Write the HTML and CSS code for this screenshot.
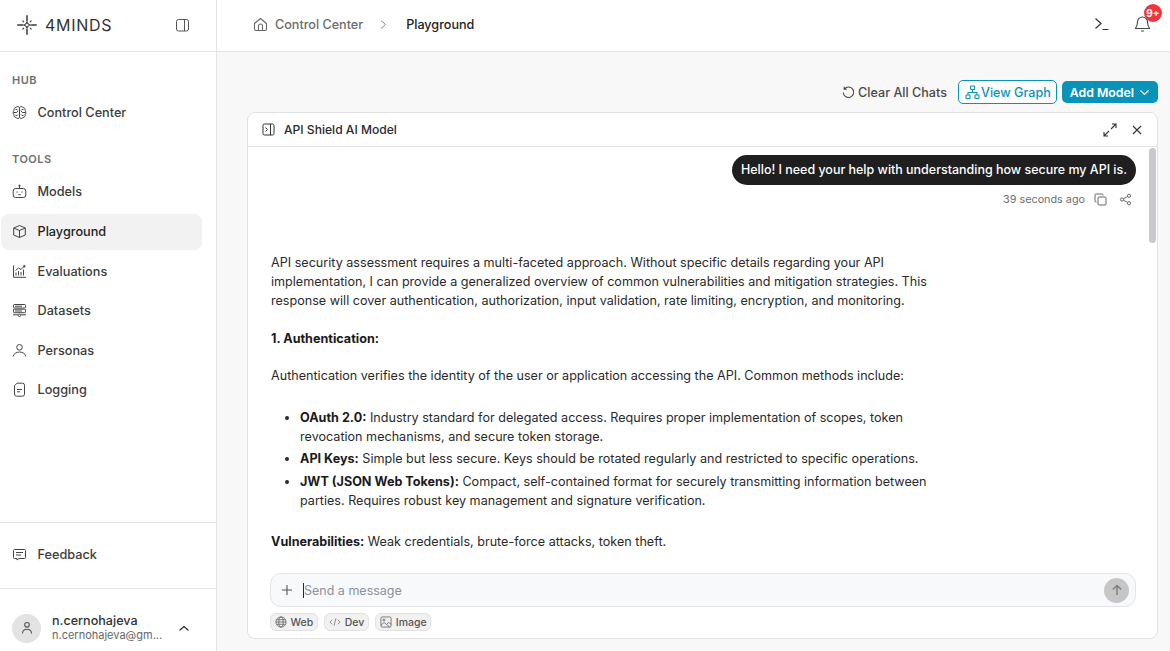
FILE: index.html
```html
<!DOCTYPE html>
<html lang="en">
<head>
    <meta charset="UTF-8">
    <title>Playground</title>
    <link rel="stylesheet" href="styles.css">
</head>
<body>
    <aside class="sidebar">
        <div class="brand">
            <div class="logo">
                <svg width="20" height="20" viewBox="0 0 20 20" fill="none" stroke="#3a3a3a" stroke-width="1.500" stroke-linecap="round"><path d="M10 .8v4.700M10 14.500v4.700M.8 10h4.700M14.500 10h4.700"/><path stroke-width="1.100" d="M10 6.200Q10.400 9.600 13.800 10Q10.400 10.400 10 13.800Q9.600 10.400 6.200 10Q9.600 9.600 10 6.200z"/><path stroke-width="1.100" d="M5.800 5.800l1 1M14.200 5.800l-1 1M5.800 14.200l1-1M14.200 14.200l-1-1"/></svg>
                <span>4MINDS</span>
            </div>
            <svg class="ico" width="15" height="15" viewBox="0 0 15 15" fill="none" stroke="#555" stroke-width="1"><rect x="1.500" y="1.500" width="12" height="11.500" rx="2"/><path d="M9.500 1.500v11.500"/></svg>
        </div>
        <div class="nav-area">
            <div class="nav-label">HUB</div>
            <a class="nav-item">
                <svg width="15" height="15" viewBox="0 0 15 15" fill="none" stroke="#444" stroke-width="1"><path d="M7.500 2.500C7 1.300 4.800 1.200 4 2.500 2.500 2.500 1.500 4 2 5.300.9 6.300.9 8.700 2 9.700 1.500 11 2.500 12.500 4 12.500c.8 1.300 3 1.200 3.500 0 .5 1.200 2.700 1.300 3.500 0 1.500 0 2.500-1.500 2-2.800 1.100-1 1.100-3.400 0-4.400.5-1.300-.5-2.800-2-2.800-.8-1.300-3-1.200-3.500 0z"/><path d="M7.500 2.500v10M1.500 7.500h3.200l1.300-1.500M13.500 7.500h-3.200L9 6M3.500 4.500h1.500l1 1M11.500 4.500H10l-1 1M3.500 10.500h1.500l1-1M11.500 10.500H10l-1-1"/></svg>
                Control Center
            </a>
            <div class="nav-label second">TOOLS</div>
            <a class="nav-item">
                <svg width="15" height="15" viewBox="0 0 15 15" fill="none" stroke="#444" stroke-width="1"><rect x="1.200" y="4.500" width="12.600" height="9" rx="2.500"/><path d="M7.500 4.500V2.500"/><circle cx="7.500" cy="1.800" r=".7" fill="#444"/><path d="M5 7.500v1.200M10 7.500v1.200M6.300 10.700h2.400"/></svg>
                Models
            </a>
            <a class="nav-item active">
                <svg width="15" height="15" viewBox="0 0 15 15" fill="none" stroke="#444" stroke-width="1" stroke-linejoin="round"><path d="M7.500 1.500l5.800 2.500v7l-5.800 2.500-5.800-2.500V4zM1.700 4l5.800 2.500L13.300 4M7.500 6.500v7"/></svg>
                Playground
            </a>
            <a class="nav-item">
                <svg width="15" height="15" viewBox="0 0 15 15" fill="none" stroke="#444" stroke-width="1"><path d="M1.500 1.500v11.800h12.500M4 11.500V8.500M6.500 11.500V7M9 11.500V8M11.500 11.500V5.500M3.500 6.500l3-2.500 2.500 1.500 3-3"/><circle cx="12.300" cy="2.300" r=".8" fill="#444"/></svg>
                Evaluations
            </a>
            <a class="nav-item">
                <svg width="15" height="15" viewBox="0 0 15 15" fill="none" stroke="#444" stroke-width="1"><rect x="1.500" y="1.500" width="12" height="3.500" rx=".8"/><rect x="1.500" y="6.200" width="12" height="3.500" rx=".8"/><path d="M1 11.800h5M9 11.800h5M3 3.200h7M3 8h7"/><circle cx="7.500" cy="12.300" r="1.200"/></svg>
                Datasets
            </a>
            <a class="nav-item">
                <svg width="15" height="15" viewBox="0 0 15 15" fill="none" stroke="#444" stroke-width="1"><circle cx="7.500" cy="4.300" r="2.800"/><path d="M1.200 13.500c.5-3 3.300-4.500 6.300-4.500s5.800 1.500 6.300 4.500"/></svg>
                Personas
            </a>
            <a class="nav-item">
                <svg width="15" height="15" viewBox="0 0 15 15" fill="none" stroke="#444" stroke-width="1"><path d="M5 1.200h5.500a2 2 0 0 1 2 2v9a2 2 0 0 1-2 2h-6a2 2 0 0 1-2-2V3.700zM5 7.500h5M5 9.800h3"/></svg>
                Logging
            </a>
        </div>
        <div class="feedback">
            <a class="nav-item">
                <svg width="15" height="15" viewBox="0 0 15 15" fill="none" stroke="#444" stroke-width="1"><path d="M2.500 2.500h10a1 1 0 0 1 1 1v7a1 1 0 0 1-1 1H7l-2 1.500v-1.500H2.500a1 1 0 0 1-1-1v-7a1 1 0 0 1 1-1zM4 5.500h7M4 8h5"/></svg>
                Feedback
            </a>
        </div>
        <div class="user">
            <div class="avatar">
                <svg width="14" height="14" viewBox="0 0 14 14" fill="none" stroke="#555" stroke-width="1.100"><circle cx="7" cy="3.800" r="2.300"/><path d="M2.500 12.500c0-3 2-4.300 4.500-4.300s4.500 1.300 4.500 4.300"/></svg>
            </div>
            <div class="user-text">
                <div class="user-name">n.cernohajeva</div>
                <div class="user-mail">n.cernohajeva@gm...</div>
            </div>
            <svg width="12" height="12" viewBox="0 0 12 12" fill="none" stroke="#333" stroke-width="1.300" stroke-linecap="round" stroke-linejoin="round"><path d="M2 8l4-3.500L10 8"/></svg>
        </div>
    </aside>

    <div class="main">
        <header class="topbar">
            <div class="crumbs">
                <svg width="15" height="15" viewBox="0 0 15 15" fill="none" stroke="#666" stroke-width="1.100" stroke-linejoin="round"><path d="M1.500 6.500L7.500 1.500l6 5v5.500a1.500 1.500 0 0 1-1.500 1.500H3a1.500 1.500 0 0 1-1.500-1.500zM5.500 13.500V9a2 2 0 0 1 4 0v4.500"/></svg>
                <span class="crumb">Control Center</span>
                <svg class="sep" width="9" height="11" viewBox="0 0 9 11" fill="none" stroke="#888" stroke-width="1"><path d="M2 1.500l4.500 4-4.500 4"/></svg>
                <span class="crumb-now">Playground</span>
            </div>
            <div class="top-actions">
                <svg width="16" height="14" viewBox="0 0 16 14" fill="none" stroke="#333" stroke-width="1.200"><path d="M1.500 1.500L7 6.500l-5.500 5M8.500 12.500h6"/></svg>
                <div class="bell">
                    <svg width="17" height="18" viewBox="0 0 17 18" fill="none" stroke="#444" stroke-width="1.100" stroke-linejoin="round"><path d="M8.500 2a5 5 0 0 0-5 5c0 4-2 6-2 6.500h14c0-.5-2-2.500-2-6.500a5 5 0 0 0-5-5zM7 16h3"/></svg>
                    <span class="badge">9+</span>
                </div>
            </div>
        </header>

        <main class="content">
            <div class="toolbar">
                <button class="btn-plain">
                    <svg width="13" height="13" viewBox="0 0 13 13" fill="none" stroke="#444" stroke-width="1.100"><path d="M2.600 2.800A5.200 5.200 0 1 1 1.300 6.500M2.200 .8v2.500h2.500"/></svg>
                    Clear All Chats
                </button>
                <button class="btn-outline">
                    <svg width="15" height="15" viewBox="0 0 15 15" fill="none" stroke="#0a93b8" stroke-width="1.100"><rect x="5.500" y="1" width="4" height="3.500" rx=".6"/><rect x="1" y="10" width="4" height="3.500" rx=".6"/><rect x="10" y="10" width="4" height="3.500" rx=".6"/><path d="M7.500 4.500v3M3 10V7.500h9V10"/></svg>
                    View Graph
                </button>
                <button class="btn-fill">
                    Add Model
                    <svg width="11" height="11" viewBox="0 0 11 11" fill="none" stroke="#fff" stroke-width="1.200"><path d="M1.500 3.500l4 4 4-4"/></svg>
                </button>
            </div>

            <section class="panel">
                <div class="panel-head">
                    <div class="panel-title">
                        <svg width="13" height="13" viewBox="0 0 13 13" fill="none" stroke="#333" stroke-width="1"><rect x="1" y="1" width="11" height="11" rx="1.500"/><path d="M8.500 1v11M3.500 4.500l2 2-2 2"/></svg>
                        API Shield AI Model
                    </div>
                    <div class="panel-icons">
                        <svg width="14" height="14" viewBox="0 0 14 14" fill="none" stroke="#333" stroke-width="1.100"><path d="M8 6l5-5M9 1h4v4M6 8l-5 5M1 9v4h4"/></svg>
                        <svg width="12" height="12" viewBox="0 0 12 12" fill="none" stroke="#333" stroke-width="1.100"><path d="M2 2l8 8M10 2l-8 8"/></svg>
                    </div>
                </div>
                <div class="chat">
                    <div class="scroll-thumb"></div>
                    <div class="user-row">
                        <div class="bubble">Hello! I need your help with understanding how secure my API is.</div>
                        <div class="meta">
                            <span>39 seconds ago</span>
                            <svg width="13" height="13" viewBox="0 0 13 13" fill="none" stroke="#666" stroke-width="1"><rect x="4" y="4" width="8" height="8" rx="1"/><path d="M2.500 9H2a1 1 0 0 1-1-1V2a1 1 0 0 1 1-1h6a1 1 0 0 1 1 1v.500"/></svg>
                            <svg width="13" height="13" viewBox="0 0 13 13" fill="none" stroke="#666" stroke-width="1"><circle cx="10" cy="2.800" r="1.600"/><circle cx="3" cy="6.500" r="1.600"/><circle cx="10" cy="10.200" r="1.600"/><path d="M4.500 5.700l4-2.100M4.500 7.300l4 2.100"/></svg>
                        </div>
                    </div>
                    <div class="answer">
                        <p>API security assessment requires a multi-faceted approach. Without specific details regarding your API implementation, I can provide a generalized overview of common vulnerabilities and mitigation strategies. This response will cover authentication, authorization, input validation, rate limiting, encryption, and monitoring.</p>
                        <p><b>1. Authentication:</b></p>
                        <p class="before-list">Authentication verifies the identity of the user or application accessing the API. Common methods include:</p>
                        <ul>
                            <li><b>OAuth 2.0:</b> Industry standard for delegated access. Requires proper implementation of scopes, token revocation mechanisms, and secure token storage.</li>
                            <li><b>API Keys:</b> Simple but less secure. Keys should be rotated regularly and restricted to specific operations.</li>
                            <li><b>JWT (JSON Web Tokens):</b> Compact, self-contained format for securely transmitting information between parties. Requires robust key management and signature verification.</li>
                        </ul>
                        <p><b>Vulnerabilities:</b> Weak credentials, brute-force attacks, token theft.</p>
                    </div>
                </div>
                <div class="composer">
                    <div class="input-box">
                        <svg width="12" height="12" viewBox="0 0 12 12" fill="none" stroke="#555" stroke-width="1.100"><path d="M6 1v10M1 6h10"/></svg>
                        <span class="caret"></span>
                        <span class="placeholder">Send a message</span>
                        <span class="send">
                            <svg width="12" height="12" viewBox="0 0 12 12" fill="none" stroke="#7c7c7c" stroke-width="1.400"><path d="M6 11V1.500M1.800 5.500L6 1.500l4.200 4"/></svg>
                        </span>
                    </div>
                    <div class="chips">
                        <span class="chip">
                            <svg width="12" height="12" viewBox="0 0 13 13" fill="none" stroke="#666" stroke-width=".9"><circle cx="6.500" cy="6.500" r="5.500"/><ellipse cx="6.500" cy="6.500" rx="2.400" ry="5.500"/><path d="M1 6.500h11M1.800 4h9.400M1.800 9h9.400"/></svg>
                            Web
                        </span>
                        <span class="chip">
                            <svg width="12" height="12" viewBox="0 0 13 13" fill="none" stroke="#777" stroke-width=".9"><path d="M3.500 4L1 6.500 3.500 9M9.500 4L12 6.500 9.500 9M7.500 2.500l-2 8"/></svg>
                            Dev
                        </span>
                        <span class="chip">
                            <svg width="12" height="12" viewBox="0 0 13 13" fill="none" stroke="#666" stroke-width=".9"><rect x="1" y="1" width="11" height="11" rx="1.500"/><circle cx="4.300" cy="4.300" r="1.100"/><path d="M1 10l3.500-3 6 5M7.500 8.500L9.500 7 12 9"/></svg>
                            Image
                        </span>
                    </div>
                </div>
            </section>
        </main>
    </div>
</body>
</html>
```

FILE: styles.css
```css
* {
    box-sizing: border-box;
}

body, html {
    height: 100%;
    margin: 0;
}

body {
    display: flex;
    overflow: hidden;
    background-color: #fff;
    color: #1f1f1f;
    font-family: Inter, "Liberation Sans", sans-serif;
    font-size: 12.600px;
}

svg {
    flex-shrink: 0;
    display: block;
}

/* sidebar */
.sidebar {
    width: 217px;
    height: 651px;
    display: flex;
    flex-direction: column;
    border-right: 1px solid #e4e4e4;
}

.brand {
    height: 52px;
    flex-shrink: 0;
    display: flex;
    justify-content: space-between;
    align-items: center;
    padding: 0 26px 1px 17px;
    border-bottom: 1px solid #e4e4e4;
}

.logo {
    display: flex;
    align-items: center;
    gap: 8px;
    font-size: 16px;
    letter-spacing: 0.7px;
    color: #333;
}

.nav-area {
    flex: 1;
    padding-top: 21px;
}

.nav-label {
    height: 14px;
    line-height: 14px;
    padding-left: 12px;
    margin-bottom: 7px;
    font-size: 11px;
    font-weight: 600;
    letter-spacing: 0.5px;
    color: #6f6f6f;
}

.nav-label.second {
    margin-top: 22.300px;
}

.nav-item {
    width: 201px;
    height: 36px;
    margin: 0 0 3.500px 1px;
    padding-left: 11px;
    display: flex;
    align-items: center;
    gap: 10.500px;
    border-radius: 8px;
    font-size: 12.700px;
    font-weight: 500;
    color: #3c3c3c;
}

.nav-item.active {
    margin-top: 4.700px;
    background-color: #f2f2f2;
    color: #222;
}

.feedback {
    height: 67px;
    flex-shrink: 0;
    padding-top: 13px;
    border-top: 1px solid #e4e4e4;
    border-bottom: 1px solid #e4e4e4;
}

.user {
    height: 62px;
    flex-shrink: 0;
    display: flex;
    align-items: center;
    padding: 16px 26px 0 12px;
}

.avatar {
    width: 29px;
    height: 29px;
    margin-right: 11px;
    display: flex;
    align-items: center;
    justify-content: center;
    border-radius: 50%;
    background-color: #e3e3e3;
}

.user-text {
    flex: 1;
}

.user-name {
    line-height: 15px;
    font-weight: 500;
    color: #333;
}

.user-mail {
    line-height: 15px;
    font-size: 11px;
    color: #666;
}

/* top bar */
.main {
    flex: 1;
    min-width: 0;
    display: flex;
    flex-direction: column;
}

.topbar {
    height: 52px;
    flex-shrink: 0;
    display: flex;
    justify-content: space-between;
    align-items: center;
    padding: 0 19px 3px 36px;
    border-bottom: 1px solid #e4e4e4;
}

.crumbs {
    display: flex;
    align-items: center;
}

.crumb {
    margin-left: 7px;
    font-weight: 500;
    color: #6b6b6b;
}

.sep {
    margin: 0 18px 0 16px;
}

.crumb-now {
    font-weight: 500;
    color: #222;
}

.top-actions {
    display: flex;
    align-items: center;
    gap: 24px;
}

.bell {
    position: relative;
}

.badge {
    position: absolute;
    top: -11px;
    left: 10px;
    width: 18px;
    height: 18px;
    border-radius: 50%;
    background-color: #f0353f;
    color: #fff;
    font-size: 10px;
    font-weight: 700;
    line-height: 18px;
    text-align: center;
}

/* content */
.content {
    flex: 1;
    min-height: 0;
    padding: 29px 12px 13px 30px;
    background-color: #f8f8f8;
}

.toolbar {
    display: flex;
    justify-content: flex-end;
    align-items: center;
    gap: 5px;
    margin-bottom: 9px;
    height: 22px;
}

button {
    font-family: inherit;
    font-size: 12.600px;
    font-weight: 500;
    display: flex;
    align-items: center;
    border-radius: 5px;
    cursor: pointer;
}

.btn-plain {
    gap: 3px;
    margin-right: 6px;
    padding: 0;
    border: 0;
    background: none;
    color: #4a4a4a;
}

.btn-outline {
    height: 24px;
    gap: 1px;
    padding: 0 5px 0 6px;
    border: 1px solid #0a93b8;
    background-color: #fff;
    color: #0a93b8;
}

.btn-fill {
    height: 22px;
    gap: 5px;
    padding: 0 8px;
    border: 0;
    background-color: #0a93b8;
    color: #fff;
    font-size: 12.300px;
    font-weight: 600;
}

.panel {
    height: 527px;
    display: flex;
    flex-direction: column;
    background-color: #fff;
    border: 1px solid #e2e2e2;
    border-radius: 8px;
}

.panel-head {
    height: 34px;
    flex-shrink: 0;
    display: flex;
    justify-content: space-between;
    align-items: center;
    padding: 0 14px;
    border-bottom: 1px solid #e4e4e4;
}

.panel-title {
    display: flex;
    align-items: center;
    gap: 9px;
    font-size: 12.100px;
    font-weight: 500;
    color: #2a2a2a;
}

.panel-icons {
    display: flex;
    align-items: center;
    gap: 14px;
}

.chat {
    position: relative;
    flex: 1;
    min-height: 0;
    overflow: hidden;
    padding: 8px 21px 0 23px;
}

.scroll-thumb {
    position: absolute;
    top: 1px;
    right: 1px;
    width: 7px;
    height: 95px;
    border-radius: 4px;
    background-color: #c6c9cf;
}

.user-row {
    display: flex;
    flex-direction: column;
    align-items: flex-end;
}

.bubble {
    height: 30px;
    line-height: 30px;
    padding: 0 9px;
    border-radius: 15px;
    background-color: #1f1f1f;
    color: #fff;
    font-weight: 500;
    font-size: 12.470px;
}

.meta {
    display: flex;
    align-items: center;
    height: 14px;
    margin-top: 7px;
    padding-right: 4px;
    gap: 9px;
    font-size: 10.800px;
    color: #6f6f6f;
}

.meta svg + svg {
    margin-left: 3px;
}

.answer {
    width: 665px;
    margin-top: 47px;
    line-height: 19px;
    color: #2a2a2a;
}

.answer p {
    margin: 0 0 18.500px;
}

.answer p.before-list {
    margin-bottom: 22.500px;
}

.answer b {
    font-weight: 700;
    color: #1a1a1a;
}

.answer ul {
    margin: 0 0 22px;
    padding-left: 29px;
}

.answer li {
    margin-bottom: 3.500px;
}

.composer {
    height: 65px;
    flex-shrink: 0;
    padding: 0 21px 0 22px;
    background-color: #fff;
    border-radius: 0 0 8px 8px;
}

.input-box {
    height: 34px;
    display: flex;
    align-items: center;
    padding: 0 6px 0 10px;
    border: 1px solid #e3e5e9;
    border-radius: 11px;
    background-color: #f8f9fb;
}

.caret {
    width: 1px;
    height: 15px;
    margin-left: 10px;
    background-color: #1f2a37;
}

.placeholder {
    flex: 1;
    color: #8a92a0;
    font-size: 12.500px;
}

.send {
    width: 25px;
    height: 25px;
    display: flex;
    align-items: center;
    justify-content: center;
    border-radius: 50%;
    background-color: #c6c6c6;
}

.chips {
    display: flex;
    gap: 6.500px;
    margin-top: 6px;
}

.chip {
    height: 18px;
    display: flex;
    align-items: center;
    gap: 4px;
    padding: 0 3.500px;
    border: 1px solid #e2e2e2;
    border-radius: 6px;
    background-color: #f1f1f1;
    font-size: 10.500px;
    font-weight: 500;
    color: #555;
}
```
